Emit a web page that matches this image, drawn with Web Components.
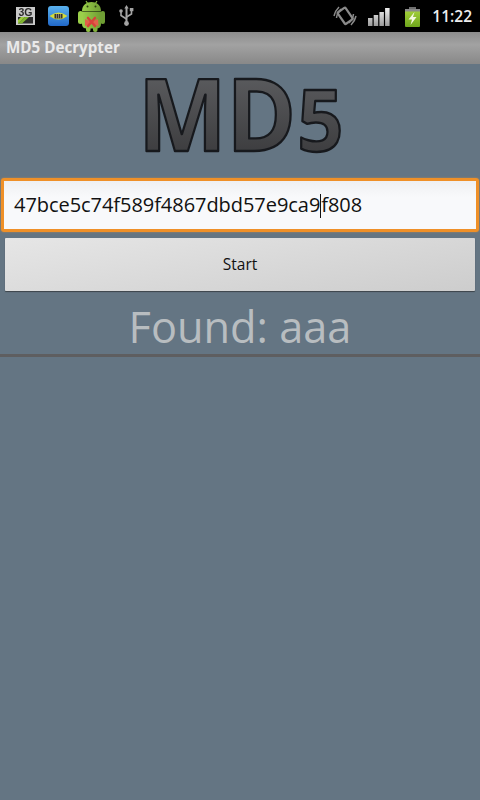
<!DOCTYPE html>
<html>
<head>
<meta charset="utf-8">
<style>
  html, body { margin: 0; padding: 0; background: #647583; }
  body { width: 480px; height: 800px; overflow: hidden; display: flex; flex-direction: column; font-family: "Open Sans", "Noto Sans", sans-serif; }
  app-main { flex: 1; }
</style>
</head>
<body>
<status-bar time="11:22"></status-bar>
<title-bar>MD5 Decrypter</title-bar>
<app-main>
  <md5-logo></md5-logo>
  <hash-field value-before="47bce5c74f589f4867dbd57e9ca9" value-after="f808"></hash-field>
  <start-button>Start</start-button>
  <found-result>Found: aaa</found-result>
</app-main>

<script>
function shadow(el, html) {
  el.attachShadow({ mode: 'open' });
  el.shadowRoot.innerHTML = html;
}

class StatusBar extends HTMLElement {
  connectedCallback() {
    shadow(this, `
      <style>
        :host { display: flex; align-items: center; justify-content: space-between; height: 32px; background: #000; flex: none; }
        .left, .right { display: flex; align-items: center; }
        .time { color: #eee; font: 600 15.5px "Open Sans", sans-serif; margin: 0 8px 0 12px; }
        svg { display: block; flex: none; filter: blur(.35px); }
      </style>
      <div class="left">
        <svg width="19" height="18" viewBox="0 0 19 18" style="margin-left:16px;margin-top:-1px">
          <rect width="19" height="18" fill="#c9c9c9"/>
          <rect x="2" y="10" width="15" height="6.500" fill="#2c2c2c"/>
          <path d="M2 16.500 L9 10 H13 L6 16.500 Z" fill="#7fb52e"/>
          <path d="M2 16.500 V13 L5 10 H9 L2 16.500Z" fill="#9ccb3c"/>
          <text x="9.500" y="9" text-anchor="middle" font-family="Liberation Sans" font-weight="700" font-size="10.500" fill="#2a2a2a">3G</text>
        </svg>
        <svg width="21" height="20" viewBox="0 0 21 20" style="margin-left:13px;margin-top:-1px">
          <defs><linearGradient id="gb" x1="0" y1="0" x2="0" y2="1"><stop offset="0" stop-color="#5ab2ee"/><stop offset="1" stop-color="#2168c8"/></linearGradient></defs>
          <rect width="21" height="20" rx="3" fill="url(#gb)"/>
          <path d="M1.500 10 Q10.500 3 19.500 10 Q10.500 17 1.500 10Z" fill="#d6dc3a"/>
          <rect x="6.500" y="8" width="8" height="4.500" fill="#37342c"/>
          <path d="M8.500 8v4.500M10.500 8v4.500M12.500 8v4.500" stroke="#a9a58c" stroke-width=".7"/>
        </svg>
        <svg width="27" height="32" viewBox="0 0 27 32" style="margin-left:9px">
          <defs><linearGradient id="ga" x1="0" y1="0" x2="1" y2="0"><stop offset="0" stop-color="#9bd04a"/><stop offset="1" stop-color="#6f9e34"/></linearGradient></defs>
          <path d="M8 1 L10 4 M19 1 L17 4" stroke="#8fc043" stroke-width="1.200"/>
          <path d="M4 11 C4 -1 23 -1 23 11 Z" fill="url(#ga)"/>
          <circle cx="9.500" cy="6.500" r="1" fill="#2c4010"/><circle cx="17.500" cy="6.500" r="1" fill="#2c4010"/>
          <path d="M4 11.600 H23 V24 Q23 28.500 18 28.500 H9 Q4 28.500 4 24Z" fill="url(#ga)"/>
          <rect x="0" y="11" width="5" height="13" rx="2.500" fill="#9bd04a"/>
          <rect x="22.500" y="11" width="4.500" height="13" rx="2.200" fill="#6f9e34"/>
          <rect x="8" y="26" width="4.500" height="6" rx="2" fill="#8ec042"/>
          <rect x="15" y="26" width="4.500" height="6" rx="2" fill="#80b03a"/>
          <path d="M7 19 L13.500 22 L20 19 L20.500 26 L13.500 23.500 L7 26Z" fill="#e2604a"/>
          <path d="M10 18 L17 26 M17 18 L10 26" stroke="#d8423a" stroke-width="2.600" stroke-linecap="round"/>
        </svg>
        <svg width="15" height="21" viewBox="0 0 15 21" style="margin-left:14px;margin-top:-2px">
          <path d="M7.500 0 L5.300 3.500 H9.700 Z" fill="#a4a4a4"/>
          <path d="M7.500 3 V17" stroke="#a4a4a4" stroke-width="2"/>
          <path d="M7.500 14 L2 10.500 V7 M7.500 12 L12.500 9 V5.500" stroke="#a4a4a4" stroke-width="1.600" fill="none"/>
          <circle cx="2" cy="6" r="1.800" fill="#a4a4a4"/>
          <rect x="10.800" y="3" width="3.600" height="3.200" fill="#a4a4a4"/>
          <circle cx="7.500" cy="18.500" r="2.400" fill="#a4a4a4"/>
        </svg>
      </div>
      <div class="right">
        <svg width="24" height="20" viewBox="0 0 24 20" style="margin-right:11px">
          <g fill="none" stroke="#8a8a8a">
            <rect x="7.500" y="3" width="9.500" height="14" rx="1" transform="rotate(-35 12 10)" stroke-width="2.200"/>
            <path d="M1 10 Q2 5 6 1 M3.500 12 Q4 7 8 3 M20.500 8 Q20 13 16 17 M23 10 Q22 15 18 19" stroke-width="1.500"/>
          </g>
        </svg>
        <svg width="22" height="19" viewBox="0 0 22 19" style="margin-right:15px;margin-top:1px">
          <defs><linearGradient id="gs" x1="0" y1="0" x2="0" y2="1"><stop offset="0" stop-color="#f0f0f0"/><stop offset="1" stop-color="#9c9c9c"/></linearGradient></defs>
          <path d="M0 11h4.500v8H0zM5.700 8h4.500v11H5.700zM11.400 5h4.500v14h-4.500zM17.100 1h4.500v18h-4.500z" fill="url(#gs)"/>
        </svg>
        <svg width="15" height="20" viewBox="0 0 15 20" style="margin-top:1px">
          <defs><linearGradient id="gc" x1="0" y1="0" x2="0" y2="1"><stop offset="0" stop-color="#a8d43c"/><stop offset="1" stop-color="#6ea51c"/></linearGradient></defs>
          <rect x="4" y="0" width="7" height="2" fill="#6e6e6e"/>
          <rect y="2" width="15" height="18" rx="1" fill="url(#gc)"/>
          <rect y="2" width="15" height="2.500" fill="#8a8a8a"/>
          <path d="M9.500 5 L3.500 12.500 H7 L5.500 18 L11.500 10 H8 Z" fill="#f4f8e0"/>
        </svg>
        <span class="time">${this.getAttribute('time')}</span>
      </div>`);
  }
}

class TitleBar extends HTMLElement {
  connectedCallback() {
    shadow(this, `
      <style>
        :host { display: flex; align-items: center; flex: none; height: 32px; padding: 0 0 2px 6px; box-sizing: border-box;
          background: linear-gradient(#8c8c8c, #a2a2a2 40%, #888); color: #eaeaea;
          font: 700 15.200px "Open Sans", sans-serif; }
      </style>
      <slot></slot>`);
  }
}

class AppMain extends HTMLElement {
  connectedCallback() {
    shadow(this, `
      <style>
        :host { display: flex; flex-direction: column; min-height: 0; }
      </style>
      <slot></slot>`);
  }
}

class Md5Logo extends HTMLElement {
  connectedCallback() {
    shadow(this, `
      <style>
        :host { display: block; height: 114px; flex: none; }
        svg { display: block; overflow: visible; }
      </style>
      <svg width="480" height="114" viewBox="0 0 480 114">
        <defs><linearGradient id="lg" x1="0" y1="0" x2="0" y2="1"><stop offset="0" stop-color="#66676a"/><stop offset="1" stop-color="#333335"/></linearGradient></defs>
        <text transform="translate(138 87) scale(.94 1)" font-family="Open Sans" font-weight="700" font-size="100" fill="url(#lg)" stroke="#17191d" stroke-width="2.400" stroke-linejoin="round">MD<tspan font-size="86" dx="1">5</tspan></text>
      </svg>`);
  }
}

class HashField extends HTMLElement {
  connectedCallback() {
    shadow(this, `
      <style>
        :host { display: block; flex: none; height: 54px; box-sizing: border-box; margin: 0 1px; border: 3px solid #ef9028; border-radius: 3px;
          background: linear-gradient(#eff0f2, #f8f9fb 35%); box-shadow: 0 0 2px #b98a54;
          color: #111; font: 400 20px/48px "Open Sans", sans-serif; letter-spacing: -.05px; padding-left: 10px; white-space: nowrap; }
        i { display: inline-block; width: 0; height: 24px; border-left: 1px solid #111; vertical-align: -6px; }
      </style>
      ${this.getAttribute('value-before')}<i></i>${this.getAttribute('value-after')}`);
  }
}

class StartButton extends HTMLElement {
  connectedCallback() {
    shadow(this, `
      <style>
        :host { display: flex; align-items: center; justify-content: center; flex: none; height: 53px; box-sizing: border-box; margin: 6px 5px 0; padding-bottom: 2px;
          background: linear-gradient(170deg, #e6e6e6, #cdcdcd); border-radius: 1px; box-shadow: 0 1px 1px #3c444a;
          color: #111; font: 400 15.500px "Open Sans", sans-serif; }
      </style>
      <slot></slot>`);
  }
}

class FoundResult extends HTMLElement {
  connectedCallback() {
    shadow(this, `
      <style>
        :host { display: block; flex: none; height: 66px; box-sizing: border-box; border-bottom: 3px solid #5e5e60; text-align: center;
          color: #b8bdc0; font: 400 43.300px/72px "Open Sans", sans-serif; }
      </style>
      <slot></slot>`);
  }
}

customElements.define('status-bar', StatusBar);
customElements.define('title-bar', TitleBar);
customElements.define('app-main', AppMain);
customElements.define('md5-logo', Md5Logo);
customElements.define('hash-field', HashField);
customElements.define('start-button', StartButton);
customElements.define('found-result', FoundResult);
</script>
</body>
</html>
